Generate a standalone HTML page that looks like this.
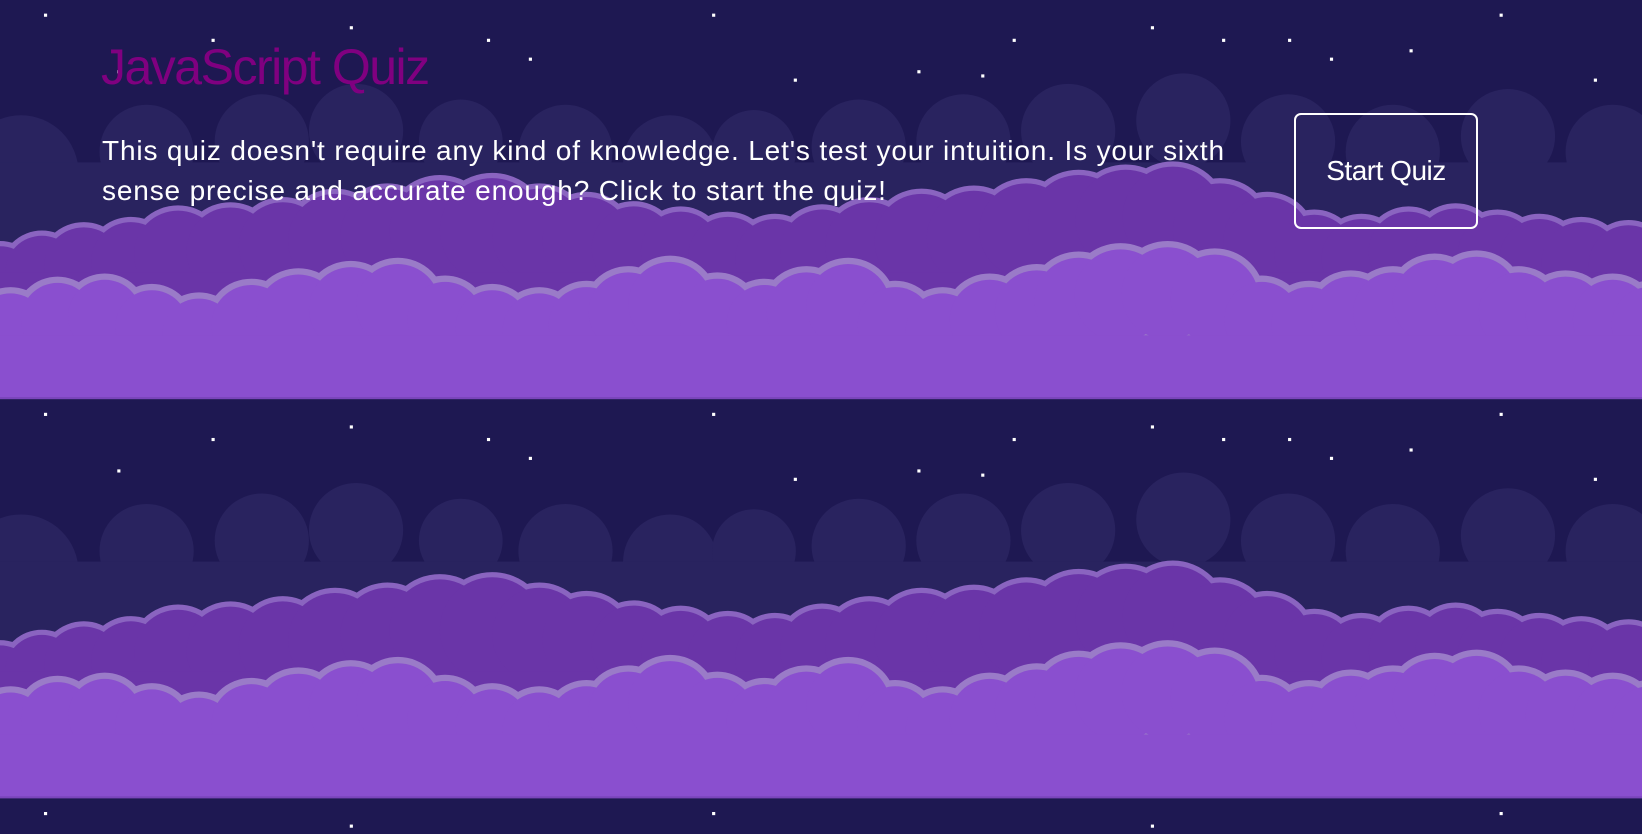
<!DOCTYPE html>
<html><head><meta charset="utf-8"><style>
html,body{margin:0;padding:0;width:1642px;height:834px;overflow:hidden;background:#1e1852}
svg.bg{position:absolute;left:0;top:0}
h1{position:absolute;left:101px;top:38px;margin:0;font:50px "Liberation Sans",sans-serif;color:#800080;letter-spacing:-1.5px;font-weight:normal}
p{position:absolute;left:102px;top:131px;margin:0;font:28px/40px "Liberation Sans",sans-serif;color:#fff;letter-spacing:0.85px;white-space:nowrap}
.btn{position:absolute;left:1294px;top:113px;width:184px;height:116px;border:2px solid #fff;border-radius:7px;box-sizing:border-box;color:#fff;font:28px "Liberation Sans",sans-serif;letter-spacing:-0.5px;display:flex;align-items:center;justify-content:center}
</style></head><body>
<svg class="bg" width="1642" height="834" viewBox="0 0 1568 796" preserveAspectRatio="none">
<defs>
<g id="back">
<circle cx="20" cy="160" r="55"/><circle cx="140" cy="140" r="45"/><circle cx="250" cy="130" r="45"/><circle cx="340" cy="120" r="45"/><circle cx="440" cy="130" r="40"/><circle cx="540" cy="140" r="45"/><circle cx="640" cy="150" r="45"/><circle cx="720" cy="140" r="40"/><circle cx="820" cy="135" r="45"/><circle cx="920" cy="130" r="45"/><circle cx="1020" cy="120" r="45"/><circle cx="1130" cy="110" r="45"/><circle cx="1230" cy="130" r="45"/><circle cx="1330" cy="140" r="45"/><circle cx="1440" cy="125" r="45"/><circle cx="1540" cy="140" r="45"/><rect x="0" y="150" width="1568" height="231"/>
</g>
<g id="mid">
<circle cx="0" cy="255" r="35"/><circle cx="40" cy="245" r="35"/><circle cx="80" cy="240" r="38"/><circle cx="125" cy="235" r="38"/><circle cx="170" cy="228" r="42"/><circle cx="220" cy="225" r="42"/><circle cx="270" cy="220" r="42"/><circle cx="320" cy="215" r="45"/><circle cx="370" cy="210" r="45"/><circle cx="420" cy="205" r="48"/><circle cx="470" cy="205" r="50"/><circle cx="515" cy="210" r="45"/><circle cx="560" cy="215" r="42"/><circle cx="605" cy="222" r="40"/><circle cx="650" cy="225" r="38"/><circle cx="695" cy="230" r="38"/><circle cx="740" cy="232" r="38"/><circle cx="785" cy="225" r="40"/><circle cx="830" cy="220" r="42"/><circle cx="880" cy="215" r="45"/><circle cx="930" cy="212" r="45"/><circle cx="980" cy="205" r="45"/><circle cx="1030" cy="200" r="48"/><circle cx="1075" cy="195" r="48"/><circle cx="1120" cy="192" r="48"/><circle cx="1165" cy="205" r="45"/><circle cx="1210" cy="215" r="42"/><circle cx="1255" cy="228" r="38"/><circle cx="1300" cy="232" r="38"/><circle cx="1345" cy="225" r="38"/><circle cx="1390" cy="222" r="38"/><circle cx="1430" cy="228" r="38"/><circle cx="1470" cy="232" r="38"/><circle cx="1510" cy="235" r="38"/><circle cx="1555" cy="238" r="38"/><rect x="0" y="245" width="1568" height="136"/>
</g>
<g id="front">
<circle cx="10" cy="295" r="35"/><circle cx="55" cy="285" r="35"/><circle cx="100" cy="282" r="35"/><circle cx="145" cy="292" r="35"/><circle cx="190" cy="300" r="35"/><circle cx="240" cy="290" r="38"/><circle cx="285" cy="282" r="40"/><circle cx="335" cy="275" r="40"/><circle cx="380" cy="272" r="40"/><circle cx="425" cy="285" r="36"/><circle cx="470" cy="292" r="35"/><circle cx="515" cy="295" r="35"/><circle cx="560" cy="290" r="36"/><circle cx="600" cy="278" r="38"/><circle cx="640" cy="270" r="40"/><circle cx="685" cy="282" r="36"/><circle cx="730" cy="288" r="36"/><circle cx="770" cy="278" r="38"/><circle cx="810" cy="272" r="40"/><circle cx="855" cy="290" r="36"/><circle cx="900" cy="295" r="35"/><circle cx="945" cy="285" r="38"/><circle cx="990" cy="278" r="40"/><circle cx="1030" cy="268" r="42"/><circle cx="1070" cy="262" r="44"/><circle cx="1115" cy="260" r="44"/><circle cx="1160" cy="265" r="42"/><circle cx="1205" cy="285" r="36"/><circle cx="1250" cy="290" r="36"/><circle cx="1290" cy="282" r="38"/><circle cx="1330" cy="278" r="38"/><circle cx="1370" cy="268" r="40"/><circle cx="1410" cy="265" r="40"/><circle cx="1450" cy="278" r="38"/><circle cx="1495" cy="282" r="38"/><circle cx="1540" cy="285" r="38"/><circle cx="1575" cy="290" r="36"/><rect x="0" y="300" width="1568" height="81"/>
</g>
<g id="stars" fill="#fff">
<rect x="42" y="13" width="3" height="3"/><rect x="334" y="25" width="3" height="3"/><rect x="465" y="37" width="3" height="3"/><rect x="680" y="13" width="3" height="3"/><rect x="758" y="75" width="3" height="3"/><rect x="876" y="67" width="3" height="3"/><rect x="937" y="71" width="3" height="3"/><rect x="1003" y="99" width="3" height="3"/><rect x="1099" y="25" width="3" height="3"/><rect x="1167" y="37" width="3" height="3"/><rect x="1230" y="37" width="3" height="3"/><rect x="1270" y="55" width="3" height="3"/><rect x="1346" y="47" width="3" height="3"/><rect x="1432" y="13" width="3" height="3"/><rect x="1522" y="75" width="3" height="3"/><rect x="505" y="55" width="3" height="3"/><rect x="967" y="37" width="3" height="3"/><rect x="202" y="37" width="3" height="3"/><rect x="112" y="67" width="3" height="3"/>
</g>
<clipPath id="tc"><rect width="1568" height="381"/></clipPath>
<g id="tile">
<rect width="1568" height="381" fill="#1e1852"/>
<use href="#stars"/>
<g clip-path="url(#tc)">
<use href="#back" fill="#29235f" y="5"/>
<use href="#mid" fill="#8a64c0" stroke="#8a64c0" stroke-width="10" y="15"/>
<use href="#mid" fill="#6a35a8" y="15"/>
<use href="#front" fill="#9a7bc8" stroke="#9a7bc8" stroke-width="12" y="20"/>
<use href="#front" fill="#8a4fcf" y="20"/>
</g>
<rect y="379" width="1568" height="2" fill="#7a45bb"/>
</g>
</defs>
<use href="#tile"/>
<use href="#tile" y="381"/>
<use href="#tile" y="762"/>
</svg>
<h1>JavaScript Quiz</h1>
<p>This quiz doesn't require any kind of knowledge. Let's test your intuition. Is your sixth<br>sense precise and accurate enough? Click to start the quiz!</p>
<div class="btn">Start Quiz</div>
</body></html>
